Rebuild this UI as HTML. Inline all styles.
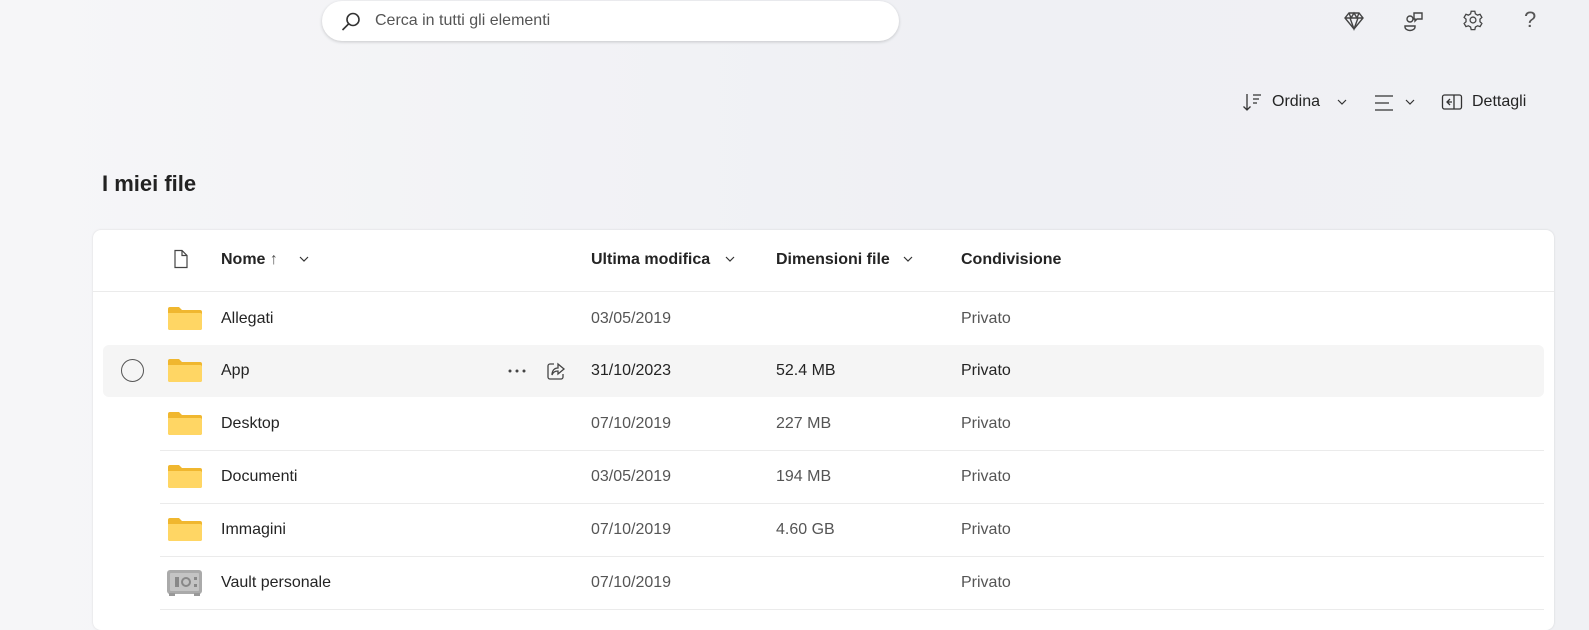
<!DOCTYPE html>
<html><head><meta charset="utf-8"><style>
*{box-sizing:border-box;margin:0;padding:0}
body{width:1589px;height:624px;overflow:hidden;background:linear-gradient(90deg,#f6f6f8,#eff0f4 60%,#f0f1f4);font-family:"Liberation Sans",sans-serif;color:#242424;position:relative}
.a{position:absolute}
.search{left:322px;top:1px;width:577px;height:40px;background:#fff;border-radius:20px;box-shadow:0 1px 3px rgba(0,0,0,.18)}
.search span{position:absolute;left:53px;top:11px;font-size:16px;color:#555}
.t{font-size:16px;white-space:nowrap}
.card{left:93px;top:230px;width:1461px;height:400px;background:#fff;border-radius:8px;box-shadow:0 0 2px rgba(0,0,0,.12)}
.line{position:absolute;left:160px;width:1384px;height:1px;background:#ebebeb}
.hdr{font-weight:bold;font-size:16px}
.g{color:#555}
.fold{position:absolute;left:167px;width:36px;height:26px}
</style></head><body>
<div class="a search">
<svg class="a" style="left:18px;top:10px" width="22" height="22" viewBox="0 0 22 22" fill="none" stroke="#333" stroke-width="1.6"><circle cx="13" cy="8.5" r="6"/><path d="M8.5 13 2.5 19"/></svg>
<span>Cerca in tutti gli elementi</span></div>
<svg class="a" style="left:1343px;top:10px" width="22" height="22" viewBox="0 0 22 22" fill="none" stroke="#444" stroke-width="1.4"><path d="M6 3h10l4 5-9 11L2 8z M2 8h18 M7 8l4 11 4-11 M6 3l2 5 3-5 3 5 2-5"/></svg>
<svg class="a" style="left:1402px;top:10px" width="24" height="22" viewBox="0 0 24 22" fill="none" stroke="#444" stroke-width="1.4"><circle cx="8" cy="9" r="3"/><path d="M3 16h10v1a5 3.5 0 0 1-10 0z"/><path d="M12 3h8v6h-5l-2 2v-2h-1z"/></svg>
<svg class="a" style="left:1462px;top:9px" width="22" height="22" viewBox="0 0 24 24" fill="none" stroke="#444" stroke-width="1.4"><circle cx="12" cy="12" r="3.2"/><path d="M10 2.5h4l.6 2.8 2.4 1.4 2.7-.9 2 3.4-2.1 1.9v2.8l2.1 1.9-2 3.4-2.7-.9-2.4 1.4-.6 2.8h-4l-.6-2.8-2.4-1.4-2.7.9-2-3.4 2.1-1.9v-2.8L2.3 9.2l2-3.4 2.7.9 2.4-1.4z"/></svg>
<div class="a" style="left:1524px;top:7px;font-size:22px;color:#555">?</div>
<svg class="a" style="left:1242px;top:92px" width="22" height="20" viewBox="0 0 22 20" fill="none" stroke="#333" stroke-width="1.3"><path d="M5 2v16 M1.5 14.5 5 18l3.5-3.5 M11 3h8 M11 7h6 M11 11h4"/></svg>
<div class="a t" style="left:1272px;top:93px">Ordina</div>
<svg class="a" style="left:1336px;top:98px" width="12" height="8" viewBox="0 0 12 8" fill="none" stroke="#333" stroke-width="1.2"><path d="M2 2l4 4 4-4"/></svg>
<svg class="a" style="left:1374px;top:93px" width="22" height="20" viewBox="0 0 22 20" fill="none" stroke="#333" stroke-width="1.3"><path d="M1 3h18 M1 10h14 M1 17h18"/></svg>
<svg class="a" style="left:1404px;top:98px" width="12" height="8" viewBox="0 0 12 8" fill="none" stroke="#333" stroke-width="1.2"><path d="M2 2l4 4 4-4"/></svg>
<svg class="a" style="left:1441px;top:93px" width="22" height="18" viewBox="0 0 22 18" fill="none" stroke="#333" stroke-width="1.3"><rect x="1.5" y="2" width="19" height="14" rx="2"/><path d="M13 2v14 M9 6 6 9l3 3 M6 9h5"/></svg>
<div class="a t" style="left:1472px;top:93px">Dettagli</div>
<div class="a" style="left:102px;top:171px;font-size:22px;font-weight:bold;color:#222">I miei file</div>
<div class="a card"></div>
<svg class="a" style="left:173px;top:249px" width="16" height="20" viewBox="0 0 16 20" fill="none" stroke="#444" stroke-width="1.2"><path d="M2 1.5h7l5 5v12H2z M9 1.5v5h5"/></svg>
<div class="a hdr" style="left:221px;top:251px">Nome <span style="font-weight:normal;color:#555">↑</span></div>
<svg class="a" style="left:298px;top:255px" width="12" height="8" viewBox="0 0 12 8" fill="none" stroke="#333" stroke-width="1.2"><path d="M2 2l4 4 4-4"/></svg>
<div class="a hdr" style="left:591px;top:251px">Ultima modifica</div>
<svg class="a" style="left:724px;top:255px" width="12" height="8" viewBox="0 0 12 8" fill="none" stroke="#333" stroke-width="1.2"><path d="M2 2l4 4 4-4"/></svg>
<div class="a hdr" style="left:776px;top:251px">Dimensioni file</div>
<svg class="a" style="left:902px;top:255px" width="12" height="8" viewBox="0 0 12 8" fill="none" stroke="#333" stroke-width="1.2"><path d="M2 2l4 4 4-4"/></svg>
<div class="a hdr" style="left:961px;top:251px">Condivisione</div>
<div class="a" style="left:93px;top:291px;width:1461px;height:1px;background:#ebebeb"></div>
<div class="a" style="left:103px;top:345px;width:1441px;height:52px;background:#f5f5f5;border-radius:6px"></div>
<div class="a" style="left:121px;top:359px;width:23px;height:23px;border:1.5px solid #555;border-radius:50%"></div>
<svg class="a" style="left:507px;top:368px" width="20" height="6" viewBox="0 0 20 6" fill="#444"><circle cx="3" cy="3" r="1.5"/><circle cx="10" cy="3" r="1.5"/><circle cx="17" cy="3" r="1.5"/></svg>
<svg class="a" style="left:546px;top:361px" width="22" height="20" viewBox="0 0 22 20" fill="none" stroke="#444" stroke-width="1.3"><path d="M8 3H4a2 2 0 0 0-2 2v11a2 2 0 0 0 2 2h11a2 2 0 0 0 2-2v-3 M12 3l6 5-6 5v-3c-3 0-5 1-6 4 0-4 2-7 6-7z"/></svg>
<div class="line" style="top:450px"></div><div class="line" style="top:503px"></div><div class="line" style="top:556px"></div><div class="line" style="top:609px"></div>
<svg width="0" height="0"><defs><g id="f"><path d="M1 4a2 2 0 0 1 2-2h9l3 3h18a2 2 0 0 1 2 2v16a2 2 0 0 1-2 2H3a2 2 0 0 1-2-2z" fill="#f0b72f"/><path d="M1 8h32a2 2 0 0 1 2 2v13a2 2 0 0 1-2 2H3a2 2 0 0 1-2-2z" fill="#ffd664"/></g></defs></svg>
<svg class="fold" style="top:305px" viewBox="0 0 36 26"><use href="#f"/></svg>
<svg class="fold" style="top:357px" viewBox="0 0 36 26"><use href="#f"/></svg>
<svg class="fold" style="top:410px" viewBox="0 0 36 26"><use href="#f"/></svg>
<svg class="fold" style="top:463px" viewBox="0 0 36 26"><use href="#f"/></svg>
<svg class="fold" style="top:516px" viewBox="0 0 36 26"><use href="#f"/></svg>
<svg class="a" style="left:166px;top:569px" width="37" height="28" viewBox="0 0 37 28"><rect x="1" y="1" width="35" height="24" rx="3" fill="#aaa"/><rect x="4" y="4" width="29" height="18" rx="1" fill="#c4c4c4"/><rect x="3" y="24" width="6" height="3" fill="#999"/><rect x="28" y="24" width="6" height="3" fill="#999"/><rect x="9" y="8" width="4" height="10" fill="#888"/><circle cx="20" cy="13" r="4" fill="none" stroke="#888" stroke-width="2"/><rect x="28" y="8" width="3" height="3" fill="#888"/><rect x="28" y="15" width="3" height="3" fill="#888"/></svg>
<div class="a t" style="left:221px;top:310px">Allegati</div><div class="a t g" style="left:591px;top:310px">03/05/2019</div><div class="a t g" style="left:961px;top:310px">Privato</div>
<div class="a t" style="left:221px;top:362px">App</div><div class="a t" style="left:591px;top:362px">31/10/2023</div><div class="a t" style="left:776px;top:362px">52.4 MB</div><div class="a t" style="left:961px;top:362px">Privato</div>
<div class="a t" style="left:221px;top:415px">Desktop</div><div class="a t g" style="left:591px;top:415px">07/10/2019</div><div class="a t g" style="left:776px;top:415px">227 MB</div><div class="a t g" style="left:961px;top:415px">Privato</div>
<div class="a t" style="left:221px;top:468px">Documenti</div><div class="a t g" style="left:591px;top:468px">03/05/2019</div><div class="a t g" style="left:776px;top:468px">194 MB</div><div class="a t g" style="left:961px;top:468px">Privato</div>
<div class="a t" style="left:221px;top:521px">Immagini</div><div class="a t g" style="left:591px;top:521px">07/10/2019</div><div class="a t g" style="left:776px;top:521px">4.60 GB</div><div class="a t g" style="left:961px;top:521px">Privato</div>
<div class="a t" style="left:221px;top:574px">Vault personale</div><div class="a t g" style="left:591px;top:574px">07/10/2019</div><div class="a t g" style="left:961px;top:574px">Privato</div>
</body></html>
